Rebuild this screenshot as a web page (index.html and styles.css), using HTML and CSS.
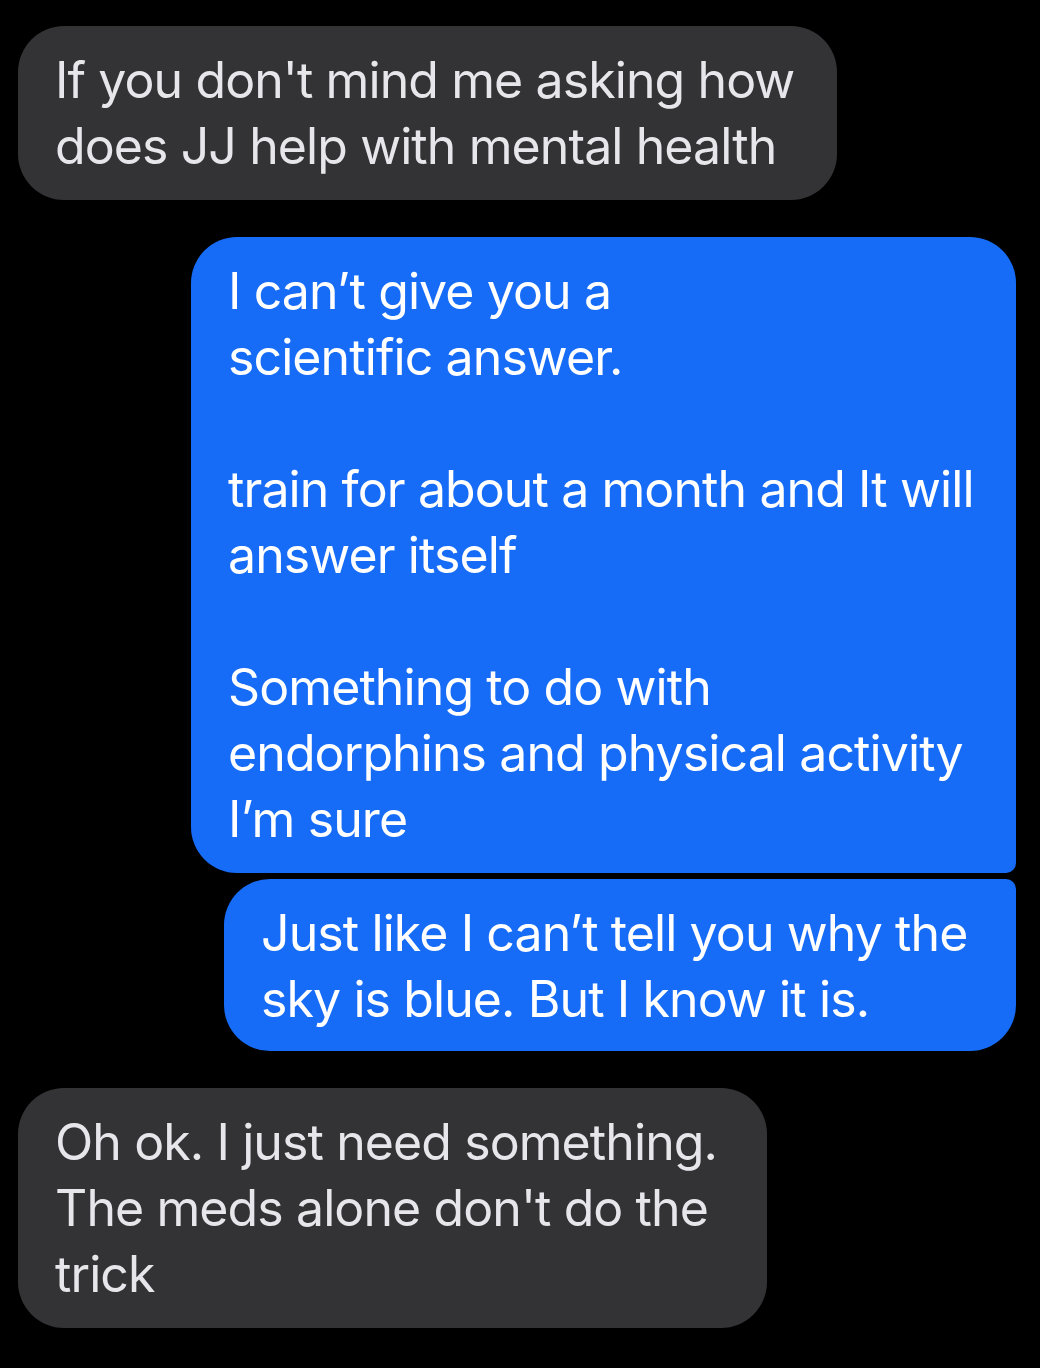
FILE: index.html
```html
<!DOCTYPE html>
<html lang="en">
<head>
    <meta charset="UTF-8">
    <title>Messages</title>
    <link rel="stylesheet" href="styles.css">
</head>
<body>
    <div class="thread">
        <div class="bubble received first">
            If you don't mind me asking how<br>does JJ help with mental health
        </div>

        <div class="bubble sent top">
            I can’t give you a<br>scientific answer.<br><br>train for about a month and It will<br>answer itself<br><br>Something to do with<br>endorphins and physical activity<br>I’m sure
        </div>
        <div class="bubble sent bottom">
            Just like I can’t tell you why the<br>sky is blue. But I know it is.
        </div>

        <div class="bubble received last">
            Oh ok. I just need something.<br>The meds alone don't do the<br>trick
        </div>
    </div>
</body>
</html>
```

FILE: styles.css
```css
body {
    margin: 0;
    background-color: #000;
    font-family: Inter, "Noto Sans", sans-serif;
}
.thread {
    display: flex;
    flex-direction: column;
    padding: 26px 24px 40px 18px;
}
.bubble {
    box-sizing: border-box;
    padding: 21px 37px;
    font-size: 50px;
    line-height: 66px;
    letter-spacing: -0.9px;
    border-radius: 46px;
    white-space: nowrap;
}
.received {
    align-self: flex-start;
    background-color: #333335;
    color: #e6e6eb;
}
.sent {
    align-self: flex-end;
    background-color: #166cf7;
    color: #fff;
}
.first {
    width: 819px;
}
.top {
    width: 825px;
    margin-top: 37px;
    border-bottom-right-radius: 10px;
}
.bottom {
    width: 792px;
    margin-top: 6px;
    border-top-right-radius: 10px;
    padding-bottom: 19px;
}
.last {
    width: 749px;
    margin-top: 37px;
}
```
